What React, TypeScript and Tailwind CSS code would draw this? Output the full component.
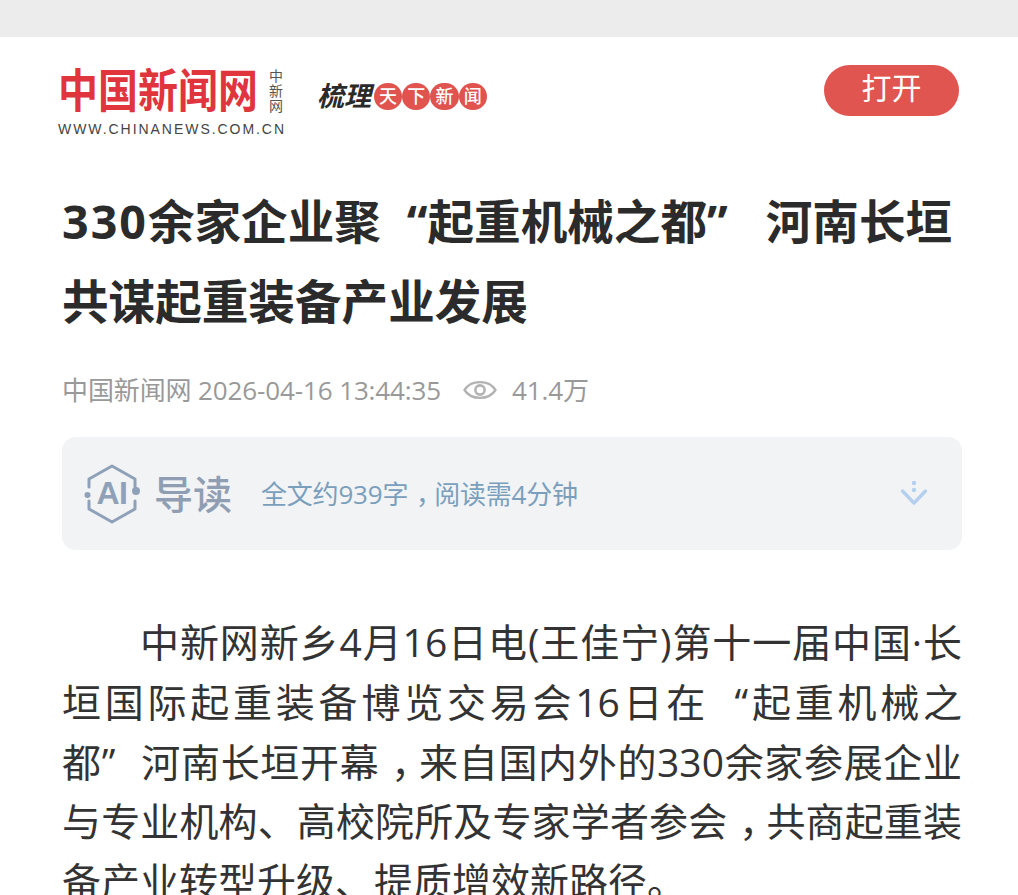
import type { ReactNode } from 'react'

const cjk = '[font-family:"Open_Sans","Noto_Sans_CJK_SC",sans-serif]'

// full width quotes and comma, the way the page's CJK font sets them
const Open = () => <span className="inline-block w-[1em] indent-0 text-right">“</span>
const Close = () => <span className="inline-block w-[1em] indent-0 text-left">”</span>
const Comma = () => <span className="inline-block w-[1em] pl-[0.3em] indent-0">，</span>
const Num = ({ children }: { children: ReactNode }) => <span className="tracking-[2px]">{children}</span>

function AiMark() {
  return (
    <svg width="56" height="60" viewBox="0 0 56 60" fill="none" className="shrink-0">
      <path d="M5 23 V15 L28 2 L51 15 V23 M51 37 V45 L28 58 L5 45 V37" stroke="#8ea1b8" strokeWidth="3" strokeLinejoin="round" strokeLinecap="round" />
      <circle cx="3.5" cy="31" r="3" fill="#8ea1b8" />
      <circle cx="52" cy="27" r="4" fill="#8ea1b8" />
      <text x="28" y="40" textAnchor="middle" fontFamily="Liberation Sans, sans-serif" fontWeight="700" fontSize="32" letterSpacing="-0.5" fill="#8ea1b8">AI</text>
    </svg>
  )
}

function EyeIcon() {
  return (
    <svg width="34" height="24" viewBox="0 0 34 24" fill="none" className="ml-[22px] shrink-0">
      <path d="M1.5 12 C8 1.5 26 1.5 32.5 12 C26 22.5 8 22.5 1.5 12 Z" stroke="#b3b3b3" strokeWidth="2.4" strokeLinejoin="round" />
      <circle cx="17" cy="12" r="4.6" stroke="#b3b3b3" strokeWidth="2.6" />
    </svg>
  )
}

export default function App() {
  return (
    <div className={`h-[895px] overflow-hidden bg-white ${cjk}`}>
      <div className="h-[37px] bg-[#ececec]" />

      {/* Header */}
      <div className="flex items-start justify-between pl-[58px] pr-[59px] pt-[28px]">
        <div className="flex items-start">
          <div>
            <div className="flex items-center">
              <span className="w-[200px] origin-center scale-y-[1.15] whitespace-nowrap text-[40px] leading-[50px] font-bold text-[#e0353c]">中国新闻网</span>
              <span className="ml-[11px] w-[15px] text-[14px] leading-[15px] text-[#555]">中新网</span>
            </div>
            <div className="mt-[6px] whitespace-nowrap text-[14px] leading-[16px] tracking-[1.95px] text-[#444] [font-family:'Liberation_Sans',sans-serif]">WWW.CHINANEWS.COM.CN</div>
          </div>
          <div className="ml-[31px] mt-[17px] flex items-center">
            <span className="text-[27px] leading-[28px] font-bold italic text-[#2a2a2a]">梳理</span>
            <div className="ml-[3px] flex">
              {['天', '下', '新', '闻'].map((c) => (
                <span key={c} className="h-[27px] w-[28.25px] rounded-full bg-[#e0534f] text-center text-[18px] leading-[27px] font-medium text-white">{c}</span>
              ))}
            </div>
          </div>
        </div>
        <div className="h-[51px] w-[135px] rounded-full bg-[#e05550] text-center text-[30px] leading-[46px] text-white">打开</div>
      </div>

      <div className="pl-[62px] pr-[56px]">
        {/* Title */}
        <h1 className="mt-[44px] w-[900px] text-[46.6px] leading-[80px] font-bold text-[#2b2b2b]">
          <Num>330</Num>余家企业聚<Open />起重机械之都<Close /> 河南长垣共谋起重装备产业发展
        </h1>

        {/* Meta */}
        <div className="mt-[31px] flex items-center text-[26px] leading-[36px] tracking-[-0.12px] text-[#999]">
          <span>中国新闻网 2026-04-16 13:44:35</span>
          <EyeIcon />
          <span className="ml-[15px]">41.4万</span>
        </div>

        {/* AI guide */}
        <div className="mt-[29px] flex h-[113px] items-center rounded-[14px] bg-[#f2f3f5] pl-[22px] pr-[32px]">
          <AiMark />
          <span className="ml-[14px] text-[39px] leading-[50px] font-medium text-[#8f9eb2]">导读</span>
          <span className="ml-[29px] text-[26px] leading-[36px] tracking-[-0.2px] text-[#7a9fbd]">全文约939字<Comma />阅读需4分钟</span>
          <svg width="32" height="32" viewBox="0 0 32 32" fill="none" className="ml-auto">
            <path d="M4.5 13 L16 25 L27.5 13" stroke="#b5d0ee" strokeWidth="3.4" strokeLinecap="round" strokeLinejoin="round" />
            <circle cx="16" cy="5" r="2.2" fill="#b5d0ee" />
            <circle cx="16" cy="12" r="2.2" fill="#b5d0ee" />
          </svg>
        </div>

        {/* Article */}
        <p className="mt-[62px] w-[900px] indent-[78px] text-justify text-[39px] leading-[59.8px] text-[#333]">
          中新网新乡4月16日电(王佳宁)第十一届中国·长垣国际起重装备博览交易会16日在<Open />起重机械之<span className="whitespace-nowrap">都<Close /></span>河南长垣开幕<Comma />来自国内外的330余家参展企业与专业机构、高校院所及专家学者参会<Comma />共商起重装备产业转型升级、提质增效新路径。
        </p>
      </div>
    </div>
  )
}
